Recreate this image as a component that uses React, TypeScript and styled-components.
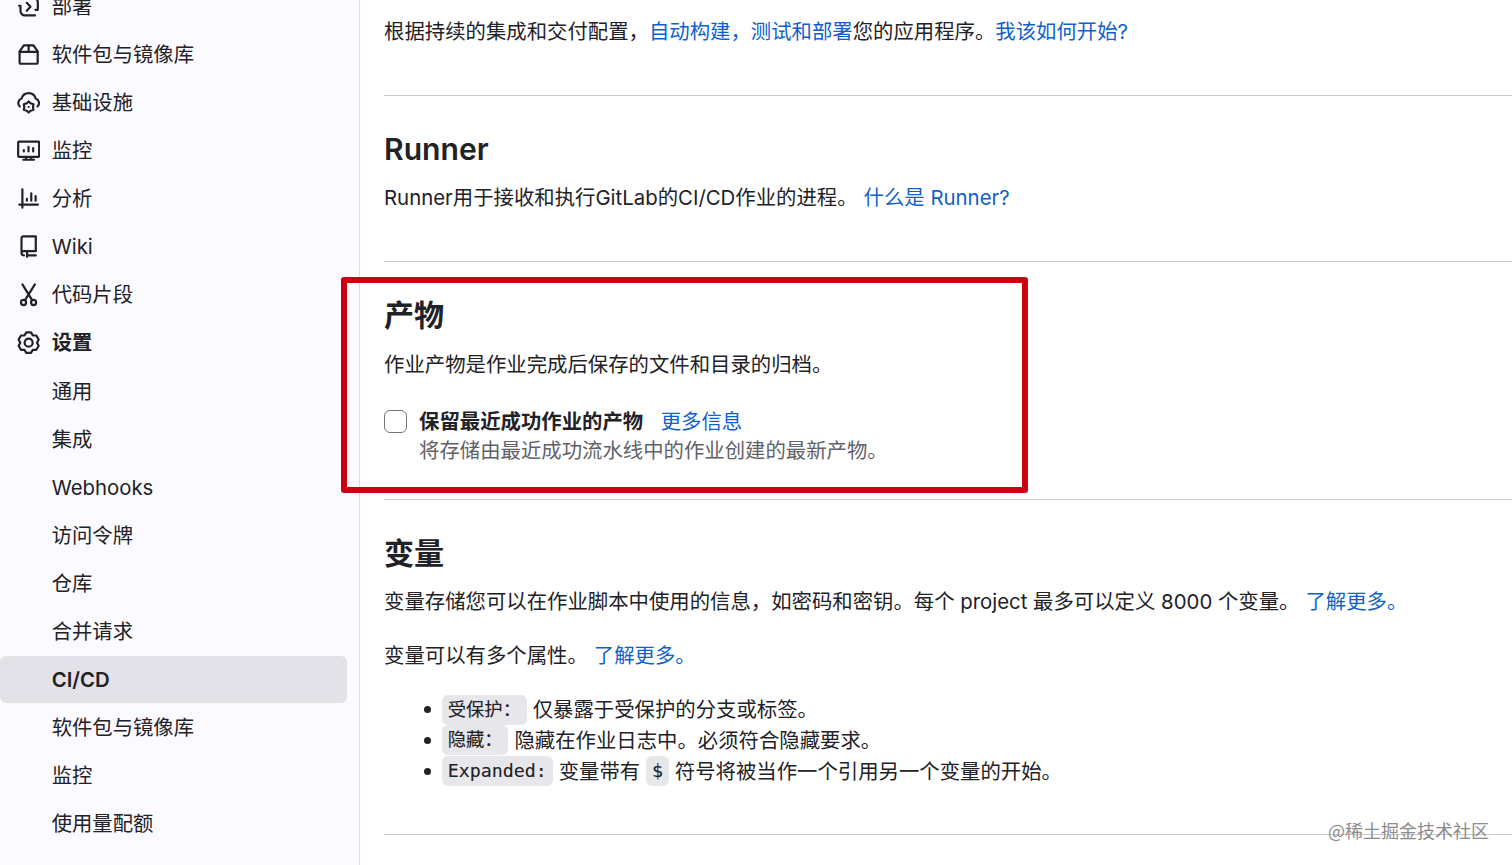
import type { ReactNode } from "react";
import styled, { createGlobalStyle } from "styled-components";

const GlobalStyle = createGlobalStyle`
  * {
    box-sizing: border-box;
  }

  body {
    margin: 0;
    overflow: hidden;
    background: #fff;
    color: #222126;
    font-family: Inter, "Noto Sans CJK SC", sans-serif;
    font-size: 20.39px;
    line-height: 29px;
  }
`;

const Page = styled.div`
  position: relative;
  display: flex;
  width: 1512px;
  height: 865px;
  overflow: hidden;
`;

const Sidebar = styled.nav`
  flex: none;
  width: 360px;
  height: 865px;
  overflow: hidden;
  background: #fafaff;
  border-right: 1px solid #dcdce2;
`;

const Menu = styled.ul`
  display: flex;
  flex-direction: column;
  gap: 1.48px;
  margin: -16.8px 12.5px 0 0;
  padding: 0;
  list-style: none;
  font-size: 20.33px;
`;

const MenuItem = styled.li<{ $active?: boolean; $bold?: boolean }>`
  display: flex;
  align-items: center;
  gap: 11.6px;
  flex: none;
  height: 46.6px;
  padding-left: 16.8px;
  border-radius: 6px;
  background: ${(props) => (props.$active ? "#e3e2e8" : "transparent")};
  font-weight: ${(props) => (props.$bold ? 600 : 400)};
`;

const IconSlot = styled.span`
  flex: none;
  width: 23.3px;
  height: 23.3px;
`;

const IconSvg = styled.svg`
  display: block;
  width: 23.3px;
  height: 23.3px;
  fill: none;
  stroke: #222126;
  stroke-width: 1.5;
  stroke-linecap: round;
  stroke-linejoin: round;
`;

const Content = styled.main`
  flex: 1;
  min-width: 0;
  padding-left: 24px;
`;

const Section = styled.section<{ $height: number }>`
  height: ${(props) => props.$height}px;
  padding-top: 35px;
  border-bottom: 1px solid #c9c9cd;
`;

const IntroSection = styled(Section)`
  padding-top: 17px;
`;

const Title = styled.h4`
  margin: 0 0 16px;
  font-size: 30.1px;
  font-weight: 600;
  line-height: 36px;
`;

const Text = styled.p`
  margin: 0 0 25px;
  white-space: nowrap;
`;

const ArtifactText = styled(Text)`
  margin: 17px 0 28px;
`;

const Link = styled.a`
  color: #105fcd;
`;

const SpacedLink = styled(Link)`
  margin-left: 6px;
`;

const CheckRow = styled.div`
  display: flex;
  align-items: flex-start;
  gap: 12px;
`;

const Checkbox = styled.span`
  flex: none;
  width: 23px;
  height: 23px;
  margin-top: 3px;
  border: 1.5px solid #737278;
  border-radius: 6px;
`;

const CheckLabel = styled.div`
  font-weight: 600;

  a {
    margin-left: 17.5px;
    font-weight: 400;
  }
`;

const HelpText = styled.div`
  color: #626168;
`;

const List = styled.ul`
  margin: -0.6px 0 0;
  padding: 0 0 0 40px;
  list-style: none;
  white-space: nowrap;
`;

const ListItem = styled.li`
  display: flex;
  align-items: center;
  height: 30.7px;

  &::before {
    content: "";
    flex: none;
    width: 7px;
    height: 7px;
    margin: 0 11px 0 0;
    border-radius: 50%;
    background: #222126;
  }
`;

const Code = styled.code`
  display: inline-block;
  height: 30px;
  margin-right: 6px;
  padding: 0 5.8px;
  border-radius: 6px;
  background: #e7e6ea;
  font-family: "DejaVu Sans Mono", "Noto Sans CJK SC", monospace;
  font-size: 18.3px;
  line-height: 30px;
  -webkit-text-stroke: 0.12px #222126;
`;

const InlineCode = styled(Code)`
  margin-left: 6px;
`;

const Highlight = styled.div`
  position: absolute;
  top: 277px;
  left: 340.5px;
  width: 687px;
  height: 216px;
  border: 6px solid #cc0010;
  border-radius: 3px;
`;

const Watermark = styled.div`
  position: absolute;
  right: 23px;
  bottom: 20px;
  color: #8c8c8c;
  font-family: "Noto Sans CJK SC", sans-serif;
  font-size: 18px;
  line-height: 29px;
`;

const icons: Record<string, ReactNode> = {
  deploy: (
    <>
      <path d="M6.7 5.4 9.3 8.1 6.7 10.8" />
      <path d="M1.4 7.4h1V11a3 3 0 0 0 3 3h7" />
      <path d="M4.4 2h6.9a3 3 0 0 1 3 3v5.2h-1.6" />
    </>
  ),
  package: (
    <>
      <path d="M1.8 5.8v7.7a.75.75 0 0 0 .75.75h10.9a.75.75 0 0 0 .75-.75V5.8l-2.9-4.2H4.7z" />
      <path d="M1.8 6.1h12.4M8 1.6v4.5" />
    </>
  ),
  infrastructure: (
    <>
      <path d="M1.9 10.6a3.2 3.2 0 0 1 1.3-5.4 4.95 4.95 0 0 1 9.6 0 3.2 3.2 0 0 1 1.3 5.4" />
      <path d="M8 7.2 9.3 8.4 11.3 9.1 11 11l.3 1.9-2 .7L8 14.8l-1.3-1.2-2-.7L5 11l-.3-1.9 2-.7z" />
      <path d="M8 11v.01" />
    </>
  ),
  monitor: (
    <>
      <rect x=".8" y="1.75" width="14.4" height="10.5" rx=".6" />
      <path d="M6.4 12.5 6 14.2M9.6 12.5l.4 1.7M4.3 14.25h7.4" />
      <path d="M4.7 7.6v1M7.9 5.4v3.2M11.1 6.3v2.3" />
    </>
  ),
  chart: (
    <path d="M3.7 1.6v12.6M1.6 12.1h12.8M6.8 8.2v1.2M9.8 4.4v5M12.8 6.2v3.2" />
  ),
  book: (
    <>
      <path d="M3.1 12.5V2.1A1.25 1.25 0 0 1 4.4.9h8.5v10.2H4.6a1.45 1.45 0 0 0 0 2.9h.2" />
      <path d="M6.9 11.3v3.7M6.9 14h6" />
    </>
  ),
  scissors: (
    <>
      <circle cx="4.5" cy="13.4" r="1.75" />
      <circle cx="11.4" cy="13.4" r="1.75" />
      <path d="m3.7.9 6.7 10.9M12.3.9 5.5 11.8" />
    </>
  ),
  settings: (
    <>
      <path d="M6.4 1h3.2l1.27 2.02 2.4.07 1.62 2.81L13.75 8l1.14 2.1-1.62 2.81-2.4.07L9.6 15H6.4l-1.27-2.02-2.4-.07L1.11 10.1 2.25 8 1.11 5.9l1.62-2.81 2.4-.07z" />
      <circle cx="8" cy="8" r="2.75" />
    </>
  ),
};

const menuItems = [
  { label: "部署", icon: "deploy" },
  { label: "软件包与镜像库", icon: "package" },
  { label: "基础设施", icon: "infrastructure" },
  { label: "监控", icon: "monitor" },
  { label: "分析", icon: "chart" },
  { label: "Wiki", icon: "book" },
  { label: "代码片段", icon: "scissors" },
  { label: "设置", icon: "settings", bold: true },
  { label: "通用" },
  { label: "集成" },
  { label: "Webhooks" },
  { label: "访问令牌" },
  { label: "仓库" },
  { label: "合并请求" },
  { label: "CI/CD", active: true, bold: true },
  { label: "软件包与镜像库" },
  { label: "监控" },
  { label: "使用量配额" },
];

const App = () => {
  return (
    <Page>
      <GlobalStyle />
      <Sidebar>
        <Menu>
          {menuItems.map((item, index) => (
            <MenuItem key={index} $active={item.active} $bold={item.bold}>
              <IconSlot>
                {item.icon && (
                  <IconSvg viewBox="0 0 16 16">{icons[item.icon]}</IconSvg>
                )}
              </IconSlot>
              {item.label}
            </MenuItem>
          ))}
        </Menu>
      </Sidebar>

      <Content>
        <IntroSection $height={96}>
          <Text>
            根据持续的集成和交付配置，<Link>自动构建，测试和部署</Link>
            您的应用程序。<Link>我该如何开始?</Link>
          </Text>
        </IntroSection>

        <Section $height={166}>
          <Title>Runner</Title>
          <Text>
            Runner用于接收和执行GitLab的CI/CD作业的进程。
            <SpacedLink>什么是 Runner?</SpacedLink>
          </Text>
        </Section>

        <Section $height={238}>
          <Title>产物</Title>
          <ArtifactText>作业产物是作业完成后保存的文件和目录的归档。</ArtifactText>
          <CheckRow>
            <Checkbox />
            <div>
              <CheckLabel>
                保留最近成功作业的产物<Link>更多信息</Link>
              </CheckLabel>
              <HelpText>将存储由最近成功流水线中的作业创建的最新产物。</HelpText>
            </div>
          </CheckRow>
        </Section>

        <Section $height={335}>
          <Title>变量</Title>
          <Text>
            变量存储您可以在作业脚本中使用的信息，如密码和密钥。每个 project
            最多可以定义 8000 个变量。
            <SpacedLink>了解更多。</SpacedLink>
          </Text>
          <Text>
            变量可以有多个属性。
            <SpacedLink>了解更多。</SpacedLink>
          </Text>
          <List>
            <ListItem>
              <Code>受保护：</Code>仅暴露于受保护的分支或标签。
            </ListItem>
            <ListItem>
              <Code>隐藏：</Code>隐藏在作业日志中。必须符合隐藏要求。
            </ListItem>
            <ListItem>
              <Code>Expanded:</Code>变量带有<InlineCode>$</InlineCode>
              符号将被当作一个引用另一个变量的开始。
            </ListItem>
          </List>
        </Section>
      </Content>

      <Highlight />
      <Watermark>@稀土掘金技术社区</Watermark>
    </Page>
  );
};

export default App;
